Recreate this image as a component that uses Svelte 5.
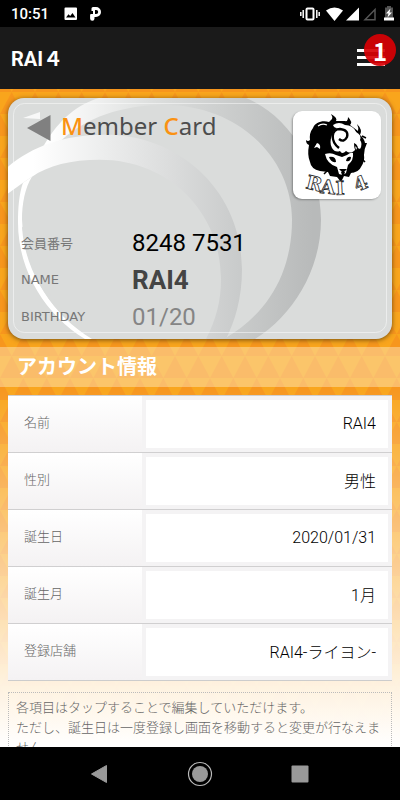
<script>
  let member = $state({ number: '8248 7531', name: 'RAI4', birthday: '01/20' });
  let fields = $state([
    { id: 'name', label: '名前', value: 'RAI4' },
    { id: 'gender', label: '性別', value: '男性' },
    { id: 'birthdate', label: '誕生日', value: '2020/01/31' },
    { id: 'birthmonth', label: '誕生月', value: '1月' },
    { id: 'shop', label: '登録店舗', value: 'RAI4-ライヨン-' }
  ]);
</script>

<div class="app">
  <div class="status">
    <span class="clock">10:51</span>
    <svg width="14" height="14" viewBox="0 0 14 14" aria-hidden="true">
      <path fill="#fff" fill-rule="evenodd" d="M1.500 0.500h10.500a1 1 0 0 1 1 1v10.500a1 1 0 0 1-1 1h-10.500a1 1 0 0 1-1-1v-10.500a1 1 0 0 1 1-1zM2 10.500h9.500l-3-4.500-2.300 3-1.700-1.800z" />
    </svg>
    <svg width="12" height="14" viewBox="0 0 12 14" aria-hidden="true">
      <path fill="#fff" fill-rule="evenodd" d="M3 0H6a5 5 0 0 1 0 10H4.500v1.500a2.200 2.200 0 0 1-4.400 0V8a1 1 0 0 1 1-1H3V4H1.500V1.500A1.500 1.500 0 0 1 3 0zM5 3v4h1.200a2 2 0 0 0 0-4z" />
    </svg>
    <svg class="signals" width="96" height="16" viewBox="0 0 96 16" aria-hidden="true">
      <g fill="none" stroke="#fff">
        <rect x="6.500" y="2.500" width="7" height="11" rx="1" stroke-width="2" />
        <path stroke-width="1.500" d="M3.200 4v8M16.800 4v8M.8 6v4M19.200 6v4" />
      </g>
      <path fill="#fff" d="M26 4.500Q34.500-1.500 43 4.500L34.500 15z" />
      <path fill="#fff" d="M59 1.500V14.500H46z" />
      <path fill="none" stroke="#555" stroke-width="1.500" d="M75 3.500V13.800H65z" />
      <path fill="#555" d="M85 1.500h2V0h4v1.500h2V12h-8z" />
      <path fill="#fff" d="M84 11.500h10v3H84zM90.500 2.500l-4.500 5h2.500l-1 4 4.500-5h-2.500z" />
    </svg>
  </div>

  <header>
    <h1>RAI<span>４</span></h1>
    <button class="menu" aria-label="メニュー">
      <span class="bars"><i></i><i></i><i></i></span>
      <span class="badge">1</span>
    </button>
  </header>

  <main>
    <svg class="tiles" aria-hidden="true">
      <defs>
        <pattern id="tri" width="70" height="44" y="3" patternUnits="userSpaceOnUse">
          <path fill="#f57f1f" fill-opacity=".4" d="M0 22L11.670 0 23.330 22 35 0 46.670 22 58.330 0 70 22zM0 22L11.670 44H-11.670zM23.330 22L35 44H11.670zM46.670 22L58.330 44H35zM70 22L81.670 44H58.330z" />
        </pattern>
      </defs>
      <rect width="100%" height="100%" fill="url(#tri)" />
    </svg>
    <div class="fade"></div>

    <section class="card">
      <svg class="rings" viewBox="0 0 384 242" preserveAspectRatio="none" aria-hidden="true">
        <defs>
          <linearGradient id="outer" gradientUnits="userSpaceOnUse" x1="40" x2="305" y1="0" y2="0">
            <stop offset="0" stop-color="#fff" />
            <stop offset=".4" stop-color="#dcdedd" />
            <stop offset="1" stop-color="#b8baba" />
          </linearGradient>
          <linearGradient id="inner" gradientUnits="userSpaceOnUse" x1="25" x2="235" y1="0" y2="0">
            <stop offset="0" stop-color="#fff" />
            <stop offset="1" stop-color="#c8caca" />
          </linearGradient>
        </defs>
        <path fill="url(#outer)" d="M34 51C48 26 65 8 91 0H238C282 18 313 70 313 122C313 174 284 219 247 242H216C256 219 284 180 284 122C284 60 230 7 157 7C113 7 78 20 54 42z" />
        <path fill="url(#inner)" d="M0 69C25 48 59 36 101 37C176 39 234 97 234 172C234 201 227 224 218 242H198C208 222 213 205 213 181C213 115 161 62 92 62C63 62 40 68 24 79L15 85L0 96z" />
        <path fill="#fff" d="M24 79C17 90 14 106 14 122C16 176 46 221 88 242H77C39 219 10 175 10 125C10 111 11 96 15 85z" />
        <path fill="#fff" fill-opacity=".8" d="M15 20L32 14V21z" />
        <path fill="#dadcdb" d="M14 130C17 176 46 219 84 242L92 242C50 219 20 174 16 128z" />
        <rect x="5.500" y="5.500" width="373" height="230" rx="11" fill="none" stroke="#fff" stroke-opacity=".5" />
      </svg>

      <div class="card-top">
        <button class="back" aria-label="戻る">
          <svg width="24" height="26" viewBox="0 0 24 26"><path fill="#808080" d="M23.500 0V26L0 13z" /></svg>
        </button>
        <h2><b>M</b>ember <b>C</b>ard</h2>
        <svg class="logo" viewBox="0 0 88 88" role="img" aria-label="RAI 4">
          <path d="M20 17C22 11 30 9 36 11L39 8Q40 6 38 3Q45 7 43 10H52Q55 11 55 6Q60 11 57 14L65 20Q66 17 64 13Q70 19 67 24Q71 27 72 32L74 32Q71 38 71 44Q72 50 68 56Q66 61 58 62L56 66 51 65 48 71 44 66 37 65 35 61 27 60Q18 58 17 51Q14 44 16 34Q13 33 13 29Q15 31 17 29Q16 22 20 17z" />
          <path fill="#fff" d="M40 14Q46 10 52 14Q60 14 63 21Q69 24 67 29Q70 33 67 38Q64 36 61 40Q57 43 53 40Q49 44 47 40Q42 42 39 37Q36 32 39 24Q40 20 44 17Q41 17 40 14z" />
          <path fill="none" stroke="#000" stroke-width="2.400" d="M46 37C37 30 38 18 47 18Q56 19 54 26Q51 32 46 28" />
          <path fill="none" stroke="#fff" stroke-width="1.200" d="M25 15Q29 12 34 14M60 18L63 22" />
          <path fill="#fff" d="M32 43Q38 41 43 44L49 46 54 44Q58 41 60 42Q61 49 55 54L53 62Q50 65 46 63L44 56Q34 53 32 43zM24 32Q28 33 27 38L24 36 21 37z" />
          <path d="M36 46Q43 45 43 51Q38 52 36 46zM53 50Q54 45 58 46Q58 51 53 50zM46 58H54L51 61H49zM48 61H52L51 64H49zM61 32Q66 34 65 41Q61 41 61 32z" />
          <path fill="#fff" d="M62 35L64 37 63 39z" />
          <path fill="none" stroke="#000" stroke-width="1.500" d="M69 25L73 27M69 48L72 51M34 60L31 63M60 61L62 58" />
          <g class="wordmark">
            <text transform="translate(12 77) rotate(14)">R</text>
            <text transform="translate(27 82) rotate(5)">A</text>
            <text transform="translate(43 84) rotate(-3)">I</text>
            <text transform="translate(64 81) rotate(-22)">4</text>
          </g>
        </svg>
      </div>

      <dl>
        <dt>会員番号</dt>
        <dd class="number">{member.number}</dd>
        <dt class="latin">NAME</dt>
        <dd class="name">{member.name}</dd>
        <dt class="latin">BIRTHDAY</dt>
        <dd>{member.birthday}</dd>
      </dl>
    </section>

    <h2 class="band">アカウント情報</h2>

    <form class="rows">
      {#each fields as field (field.id)}
        <div class="row">
          <label for={field.id}>{field.label}</label>
          <div class="cell"><input id={field.id} type="text" bind:value={field.value} /></div>
        </div>
      {/each}
    </form>

    <p class="note">各項目はタップすることで編集していただけます。<br />ただし、誕生日は一度登録し画面を移動すると変更が行なえません。</p>
  </main>

  <nav>
    <button aria-label="戻る">
      <svg width="24" height="24" viewBox="0 0 24 24"><path fill="#999" stroke="#999" stroke-linejoin="round" d="M18.500 3.500V20.500L3.500 12z" /></svg>
    </button>
    <button aria-label="ホーム">
      <svg width="26" height="26" viewBox="0 0 26 26">
        <circle cx="13" cy="13" r="11.500" fill="none" stroke="#bbb" stroke-width="1.200" />
        <circle cx="13" cy="13" r="8" fill="#999" />
      </svg>
    </button>
    <button aria-label="最近使ったアプリ">
      <svg width="24" height="24" viewBox="0 0 24 24"><rect x="3.500" y="3.500" width="17" height="17" rx="1" fill="#999" /></svg>
    </button>
  </nav>
</div>

<style>
  :global(body) {
    margin: 0;
    background: #000;
  }
  .app {
    display: flex;
    flex-direction: column;
    height: 100vh;
    overflow: hidden;
    font-family: Roboto, "Noto Sans CJK JP", sans-serif;
  }
  h1, h2, p, dl, dd {
    margin: 0;
  }
  button {
    padding: 0;
    border: 0;
    background: none;
  }
  svg {
    display: block;
  }
  .status {
    display: flex;
    flex: none;
    align-items: center;
    gap: 12px;
    height: 27px;
    padding: 0 4px 0 11px;
    background: #000;
    color: #fff;
  }
  .clock {
    margin-right: 3px;
    font-size: 15px;
    font-weight: 500;
  }
  .signals {
    margin-left: auto;
  }
  header {
    display: flex;
    flex: none;
    align-items: center;
    justify-content: space-between;
    height: 62px;
    padding: 0 4px 0 11px;
    background: #1a1a1a;
    color: #fff;
  }
  h1 {
    font-size: 20px;
    line-height: 28px;
    font-weight: 700;
  }
  h1 span {
    font-family: "Noto Sans CJK JP", sans-serif;
    font-weight: 700;
  }
  .menu {
    position: relative;
    width: 39px;
    height: 32px;
    margin-bottom: 16px;
  }
  .bars {
    display: flex;
    flex-direction: column;
    gap: 4px;
    width: 28px;
    padding-top: 15px;
  }
  .bars i {
    height: 3px;
    background: #fff;
  }
  .badge {
    position: absolute;
    top: 0;
    right: 0;
    width: 32px;
    height: 32px;
    border-radius: 50%;
    background: rgb(216 0 4 / 0.92);
    color: #fff;
    font: 700 24px/33px "Noto Sans CJK JP", sans-serif;
  }
  main {
    position: relative;
    flex: 1;
    min-height: 0;
    overflow-x: hidden;
    overflow-y: auto;
    scrollbar-width: none;
    background: #f9a51c;
  }
  .tiles, .fade {
    position: absolute;
    inset: 0;
    width: 100%;
    height: 100%;
  }
  .fade {
    background: linear-gradient(rgb(255 255 255 / 0) 45%, rgb(255 250 242 / 0.5) 70%, rgb(255 250 242 / 0.9) 90%, #fff 100%);
  }
  .card {
    position: relative;
    margin: 9px 8px 8px;
    padding: 13px 11px 4px 13px;
    overflow: hidden;
    border-radius: 16px;
    background: #dadcdb;
    box-shadow: 0 1px 5px rgb(70 50 10 / 0.75);
  }
  .rings {
    position: absolute;
    inset: 0;
    width: 100%;
    height: 100%;
  }
  .card-top {
    position: relative;
    display: flex;
    align-items: flex-start;
  }
  .back {
    margin: 4px 10px 0 6px;
  }
  .card h2 {
    flex: 1;
    color: #4d4d4d;
    font: 400 24px/30px "Noto Sans", sans-serif;
  }
  .card h2 b {
    color: #fa9212;
    font-weight: 500;
  }
  .logo {
    width: 88px;
    height: 88px;
    border-radius: 9px;
    background: #fff;
    box-shadow: -1px 1px 2px rgb(0 0 0 / 0.3);
  }
  .wordmark {
    fill: #fff;
    stroke: #222;
    stroke-width: 0.8px;
    font: 700 19px "DejaVu Serif", serif;
  }
  dl {
    position: relative;
    display: grid;
    grid-template-columns: 111px 1fr;
    grid-auto-rows: 37px;
    align-items: center;
    padding-top: 25px;
  }
  dt {
    color: #777;
    font-size: 13px;
  }
  .latin {
    font-family: "DejaVu Sans", sans-serif;
  }
  dd {
    color: #858585;
    font-size: 24px;
  }
  dd.number {
    color: #000;
  }
  dd.name {
    color: #444;
    font-size: 26px;
    font-weight: 700;
  }
  .band {
    position: relative;
    padding: 0 17px;
    background: rgb(255 240 215 / 0.42);
    color: #fff;
    font: 700 20px/38px "Noto Sans CJK JP", sans-serif;
    padding-bottom: 2px;
  }
  .rows {
    position: relative;
    margin: 8px 8px 11px;
    border-bottom: 1px solid #ccc;
    background: #f4f3f4;
  }
  .row {
    display: flex;
    height: 56px;
    border-top: 1px solid #d0cfd0;
  }
  .row label {
    box-sizing: border-box;
    width: 35%;
    padding-left: 16px;
    background: linear-gradient(#fff, #f4f2f3);
    color: #666;
    font-size: 13px;
    font-weight: 300;
    line-height: 54px;
  }
  .cell {
    flex: 1;
    padding: 4px;
  }
  .cell input {
    box-sizing: border-box;
    width: 100%;
    height: 48px;
    padding: 0 12px 2px;
    border: 0;
    outline: 0;
    background: #fff;
    color: #000;
    font: 300 16px Roboto, "Noto Sans CJK JP", sans-serif;
    text-align: right;
  }
  .note {
    position: relative;
    margin: 0 8px 12px;
    padding: 5px 7px;
    border: 1px dotted #bbb;
    color: #666;
    font-size: 13px;
    font-weight: 300;
    line-height: 20px;
  }
  nav {
    display: grid;
    flex: none;
    grid-template-columns: repeat(3, 1fr);
    height: 53px;
    padding: 0 12.5%;
    background: #000;
  }
  nav button {
    display: flex;
    align-items: center;
    justify-content: center;
  }
</style>
